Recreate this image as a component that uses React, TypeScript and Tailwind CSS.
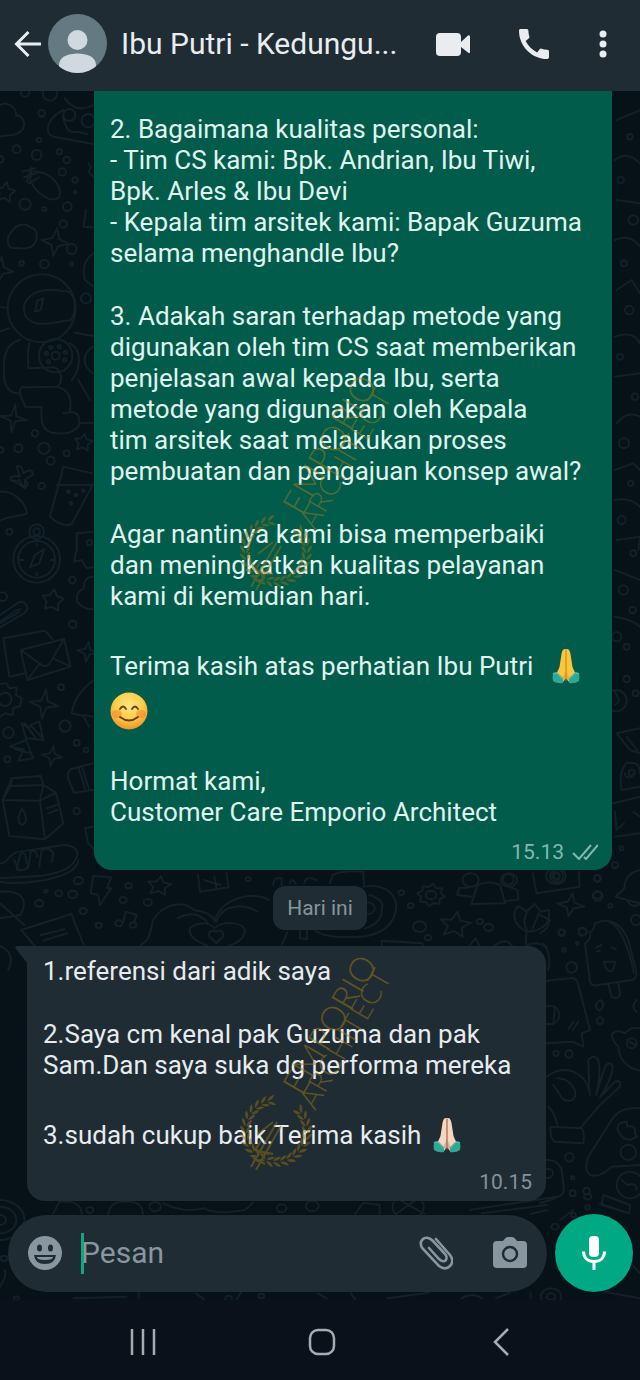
import React from 'react';

type Dot = [number, number, number];

const LEFT_TOP_DOTS: Dot[] = [
  [150, 10, 22], [75, 8, 12], [125, 70, 10], [117, 150, 7], [50, 178, 12], [110, 195, 15], [178, 185, 8],
  [200, 210, 10], [187, 246, 11], [225, 270, 8], [225, 307, 4], [75, 343, 17], [202, 350, 13], [190, 402, 11],
  [133, 357, 6], [65, 520, 7], [133, 522, 13], [215, 477, 15], [214, 522, 5], [258, 625, 15], [0, 208, 10],
  [105, 1030, 10], [55, 1075, 12], [132, 1075, 17], [200, 1090, 9], [152, 1112, 12], [2, 1080, 8],
  [208, 75, 18], [265, 92, 20], [125, 655, 102], [167, 797, 50], [167, 797, 12], [140, 790, 5], [152, 772, 5],
  [178, 770, 5], [196, 787, 5], [194, 810, 5], [145, 815, 5],
];

const LEFT_BOTTOM_DOTS: Dot[] = [
  [125, 18, 10], [28, 155, 9], [217, 300, 10], [218, 433, 11], [8, 350, 13], [15, 658, 20], [195, 738, 17],
  [25, 758, 16], [230, 788, 9], [258, 810, 7], [22, 838, 9], [230, 993, 10], [110, 238, 70], [110, 238, 55],
  [110, 155, 22], [110, 155, 10], [205, 35, 4], [228, 45, 4], [250, 32, 4], [213, 70, 4], [183, 622, 9], [268, 188, 8],
];

const RIGHT_DOTS: Dot[] = [
  [50, 48, 20], [50, 48, 9], [172, 55, 10], [173, 108, 15], [211, 137, 6], [65, 218, 10], [127, 215, 12],
  [72, 270, 5], [112, 250, 4], [95, 322, 16], [180, 482, 10], [48, 580, 8], [87, 582, 11], [88, 892, 13],
  [98, 953, 5], [98, 1000, 9], [140, 993, 10], [143, 1042, 7], [265, 877, 23], [275, 550, 15], [30, 465, 28],
  [288, 180, 15], [25, 940, 14], [270, 975, 40],
];

const MIDDLE_DOTS: Dot[] = [
  [192, 62, 11], [315, 77, 8], [144, 100, 9], [178, 103, 11], [96, 130, 10], [302, 120, 9], [362, 127, 10],
  [204, 153, 9], [242, 196, 8], [608, 58, 6], [983, 98, 7], [1006, 137, 7], [1056, 105, 13], [1028, 200, 16],
  [1049, 233, 8], [1176, 184, 8], [1197, 202, 11], [1464, 106, 10], [1376, 217, 8], [1428, 215, 10],
  [1153, 60, 20], [1247, 60, 20], [1362, 48, 24], [1362, 48, 9], [900, 145, 18], [112, 94, 4],
];

const EDGE_DOTS: Dot[] = [
  [350, 20, 14], [380, 50, 9], [380, 147, 10], [407, 190, 9], [395, 428, 9], [365, 655, 6], [345, 705, 9],
  [292, 745, 10], [165, 740, 14], [25, 748, 16], [348, 212, 32], [398, -60, 10], [370, -120, 14], [400, -230, 9],
  [365, -330, 12], [392, -440, 8], [372, -560, 15], [405, -700, 10], [360, -820, 9], [388, -960, 13],
  [372, -1100, 9], [400, -1230, 14], [362, -1350, 10], [390, -1480, 8],
];

const BOTTOM_DOTS: Dot[] = [
  [0, 90, 60], [0, 90, 40], [0, 90, 15], [380, 50, 14], [765, 48, 16], [1360, 110, 9], [10, 205, 8], [40, 325, 6],
  [1350, 320, 25], [1350, 320, 10], [1405, 75, 6], [1440, 20, 9], [220, 60, 9], [690, 55, 12], [640, 318, 7],
  [1000, 50, 38], [560, 325, 8],
];

function Dots({ items }: { items: Dot[] }) {
  return (
    <>
      {items.map(([cx, cy, r], i) => (
        <circle key={i} cx={cx} cy={cy} r={r} />
      ))}
    </>
  );
}

function starPath(cx: number, cy: number, r: number, points: number, inner: number) {
  const steps = Array.from({ length: points * 2 }, (_, i) => {
    const radius = i % 2 === 0 ? r : r * inner;
    const angle = (Math.PI * i) / points - Math.PI / 2.2;
    return `${(cx + radius * Math.cos(angle)).toFixed(1)} ${(cy + radius * Math.sin(angle)).toFixed(1)}`;
  });
  return `M${steps.join('L')}Z`;
}

// Faint line drawings behind the conversation
function Wallpaper() {
  return (
    <svg
      className="absolute inset-0 h-full w-full [&_*]:[vector-effect:non-scaling-stroke]"
      viewBox="0 91 640 1209"
      preserveAspectRatio="xMidYMin slice"
      fill="none"
      stroke="#132027"
      strokeWidth="2"
      strokeLinejoin="round"
      strokeLinecap="round"
      aria-hidden="true"
    >
      <g transform="translate(0 90) scale(.3333)">
        <Dots items={LEFT_TOP_DOTS} />
        <path d="M0 45C20 35 50 50 48 75C75 80 80 110 60 125C40 145 20 130 0 140" />
        <path d="M280 45C250 62 215 58 195 25M190 60C140 85 130 130 160 140L280 162M188 80C200 112 200 132 232 125L262 132" />
        <path d="M95 245C140 240 190 280 178 322C150 342 110 310 90 272ZM68 245L105 235M72 262L115 248M85 280L118 262M95 232L80 275" />
        <path d={starPath(15, 308, 32, 5, 0.5)} />
        <path d="M40 420C50 400 80 400 90 412C115 415 115 450 100 465C80 485 50 470 42 475C20 475 15 440 40 420Z" />
        <path d={starPath(166, 456, 42, 4, 0.35)} />
        <path d={starPath(0, 540, 40, 4, 0.35)} />
        <path d="M90 620C120 590 180 602 207 605C235 630 225 670 212 690C170 695 120 710 95 695C65 680 65 640 90 620ZM112 632L130 625L122 660L105 665Z" />
        <path d="M60 750C20 760 8 800 12 850C10 890 30 912 60 910M88 760C80 790 85 820 85 835L165 832C188 845 188 880 170 890L65 892C50 910 70 930 75 950L125 952C120 1000 130 1030 170 1030C220 1035 242 1010 238 990C235 962 215 965 190 970M210 965C215 930 210 900 175 892" />
        <path d="M0 725L28 715M225 728L280 738M210 760C250 780 240 840 215 870M235 870L270 930M280 770C245 790 245 830 280 850M238 1000L280 998M0 650L20 655" />
        <path d={starPath(40, 985, 42, 4, 0.25)} />
        <path d={starPath(250, 1058, 28, 5, 0.5)} />
        <path d="M60 1160L50 1130Q65 1120 70 1150Q100 1130 98 1155Q80 1165 75 1170Q95 1190 70 1190L58 1170Q35 1180 30 1165Q40 1155 60 1160M175 1190L190 1130L275 1150M265 220Q280 232 265 245L280 260M258 360L250 410L280 412M280 490Q240 520 255 570L280 590" />
      </g>

      <g transform="translate(0 480) scale(.3333)">
        <Dots items={LEFT_BOTTOM_DOTS} />
        <path d="M0 35C40 30 80 70 80 100C60 110 20 110 0 122M40 0L75 25V0M180 0L150 108C170 132 200 140 215 132L275 20M170 15H280" />
        <path d="M90 262L105 225L132 208L118 250ZM110 190V198M110 278V286M60 240H70M152 240H160" />
        <path d="M280 155L230 160V210L222 245L245 240L260 265L280 262M280 290Q250 290 252 325Q225 335 232 365Q250 390 280 388" />
        <path d={starPath(158, 362, 34, 5, 0.55)} />
        <path d="M0 405L60 365C80 365 88 385 75 398L0 442M0 425L50 390L62 388M0 430L58 396" />
        <path d="M75 580L28 590L10 475L135 452L158 478M62 510L192 477L212 560L82 600ZM62 510L130 558Q145 560 150 548L192 477M82 600L118 552M212 560L160 535" />
        <path d="M0 612L20 610L28 625L50 622L48 645L65 655L60 678L40 685L38 705L15 700L0 710" />
        <path d={starPath(132, 672, 44, 4, 0.3)} />
        <path d={starPath(262, 515, 30, 4, 0.35)} />
        <path d={starPath(156, 828, 30, 4, 0.35)} />
        <path d="M65 730L85 745L92 735L118 725L130 780L78 775ZM75 730L108 775M95 740L125 772M30 800L78 780L100 835L55 842L72 808ZM45 808L92 820" />
        <path d="M280 602Q225 640 215 700L250 708L268 740M252 705L280 710" />
        <path d="M35 895L122 888L130 915L168 938L190 1030L135 1078L28 1068L8 960ZM35 895L32 918L8 960L120 962L135 1078M130 915L120 962L168 938M32 918L128 915M66 985Q45 1025 66 1035Q90 1025 66 985M140 985L170 975M145 1000L172 990" />
        <path d="M280 850L212 868Q195 880 210 910L222 938L280 930M235 862L258 935M245 858L268 932M280 1040L255 1045L265 1090L280 1105" />
        <path d="M0 1150C30 1150 20 1120 60 1115L190 1095C225 1095 240 1115 228 1135C210 1180 130 1190 80 1190L0 1195M50 1170L60 1125Q75 1110 78 1135L80 1150M85 1165L92 1115Q110 1105 112 1130M118 1160L125 1110Q150 1100 160 1120L155 1145" />
      </g>

      <g transform="translate(0 860) scale(.40816 .33333)">
        <Dots items={MIDDLE_DOTS} />
        <path d="M0 65Q40 75 110 60Q190 40 192 0M35 0L45 30Q70 35 70 5M228 48L272 52L262 85H272L245 135L240 105L222 100ZM485 45L490 95L560 82L555 40M500 60L540 75M525 50L530 85" />
        <path d={starPath(390, 78, 30, 5, 0.5)} />
        <path d="M0 95C55 90 70 120 50 165L0 175M0 130L60 195M52 210L175 162L205 255M52 210L85 258M100 225L158 208M105 242L165 220M310 155L335 165L328 190M302 185L308 155M282 190A8 8 0 1 0 300 190A8 8 0 1 0 282 190M318 195A8 8 0 1 0 334 195A8 8 0 1 0 318 195" />
        <path d="M345 255C370 240 370 200 375 180C400 130 450 120 475 150Q525 160 525 185C540 115 620 90 660 120M435 175Q480 145 510 190M530 185C545 130 600 130 630 155M525 205C510 180 460 190 465 215C470 240 495 250 510 258M525 205C545 180 600 185 600 215C595 240 580 250 560 258M530 215Q510 205 512 228L530 250L548 228Q545 205 530 215M690 255L705 215" />
        <path d="M670 75Q668 50 690 55V75M710 70Q715 50 725 72M745 70Q750 45 775 60M808 70L815 45Q840 30 890 35L892 75M890 80C950 70 975 110 970 150C960 220 900 235 850 230C810 235 780 220 770 210M735 210V235L752 238V210M905 105Q945 120 935 150Q935 190 895 205M945 0Q985 30 1025 0" />
        <path d={starPath(1056, 105, 34, 8, 0.72)} />
        <path d={starPath(1115, 195, 40, 5, 0.45)} />
        <path d={starPath(1398, 135, 34, 4, 0.35)} />
        <path d="M1170 75Q1200 60 1225 75L1238 130L1155 132ZM1150 82L1125 85L1120 105L1155 110M1250 82L1268 90L1270 120L1238 122M1305 40L1315 100L1420 80L1418 35" />
        <path d="M1290 215C1250 190 1258 150 1270 138L1290 155L1310 132L1325 155L1345 150Q1350 200 1310 212L1290 215L1288 260M1290 160Q1278 190 1292 212M1320 160L1305 205M1568 30Q1530 40 1530 85L1508 110L1568 130" />
        <path d="M0 258Q40 280 20 330M935 258V242L1035 250V258M1150 258L1165 235L1175 258M1210 258Q1240 230 1255 258M1290 258Q1310 240 1340 262" />
      </g>

      <g transform="translate(540 860) scale(.3333)">
        <Dots items={RIGHT_DOTS} />
        <path d="M260 120Q280 150 300 130" />
        <path d="M165 190Q160 215 150 215Q155 240 135 250L150 365Q155 380 175 375L275 360Q295 355 288 330L265 240Q240 180 190 182ZM205 183Q255 205 282 340M205 372L215 410Q232 420 240 405L235 366M170 275L180 272M215 262L228 268M192 305H225Q222 340 205 332Q195 325 192 305M185 255L170 262" />
        <path d="M20 362L90 355Q110 350 115 375L150 510L125 520L130 560L98 545L20 550M85 508L100 485M98 510L115 485M45 440L40 490M10 250Q35 280 25 330M0 165L30 180L20 205L0 220" />
        <path d="M300 505Q270 500 255 520Q225 505 215 525Q220 545 235 560Q240 620 300 632M268 545L285 555M180 420Q200 430 180 452Q155 440 180 420M290 420Q270 440 290 455" />
        <path d="M20 650Q60 620 100 635Q145 655 150 705L148 690L145 600Q160 580 175 600Q185 640 168 705L195 620Q210 600 218 620Q215 660 180 712L225 665Q245 660 240 680L180 735L120 805M52 655C90 655 110 690 105 710C95 730 70 725 60 705L40 675M25 740Q45 760 52 795M32 800L125 805Q135 815 130 850L45 845Q28 835 32 800" />
        <path d="M300 745Q240 740 215 780L145 890Q130 930 150 945Q180 955 215 920L300 915M240 790L260 785L262 800Q290 795 285 820L292 830L270 840L250 835L235 815Q228 800 240 790" />
        <path d="M0 900Q55 895 65 930L72 990Q70 1010 30 1020L0 1030M245 960L262 975Q290 965 290 990M190 1005L270 1035L268 1060L185 1035ZM60 1080L100 1050" />
      </g>

      <g transform="translate(500 630) scale(.3333)">
        <Dots items={EDGE_DOTS} />
        <path d="M350 310L420 295M350 310L390 360L420 370M380 320L412 362M365 480Q355 430 378 400Q420 390 420 430M365 480L420 470M375 430A12 12 0 1 0 400 430M340 520L420 500M345 545L350 600L372 580M345 620L420 610M400 545L420 560M345 185L358 212L345 225" />
        <path d="M345 -40Q400 -30 420 -10M345 -180L420 -150M350 -270L420 -280L415 -240M345 -390Q390 -400 420 -370M345 -480L400 -500L420 -480M350 -620Q380 -660 420 -640M345 -760L420 -770M345 -880Q400 -900 420 -860M350 -1020L395 -1050L420 -1010M345 -1170Q390 -1190 420 -1150M350 -1290L420 -1280M345 -1410Q380 -1440 420 -1400M350 -1530L420 -1560" />
      </g>

      <g transform="translate(0 1190) scale(.40816 .33333)">
        <Dots items={BOTTOM_DOTS} />
        <path d="M130 72L145 35Q200 30 200 72M265 72Q270 35 300 35Q350 30 350 72M400 40Q450 70 500 55Q530 75 600 60L620 38M870 72L890 38L930 45V72M965 20L1040 72M1030 20L970 72M1150 60L1365 20M1180 70L1340 45M1300 72L1340 60M1470 40L1540 70" />
        <path d="M180 325L310 320M340 305V325M480 310L500 328M590 308L580 328M780 310L800 325M860 310L870 328M950 325L1050 308M1130 325Q1160 305 1180 325M1215 325L1250 308M1300 310V325M1480 305L1568 325M1530 200L1568 250M0 290Q20 250 10 240" />
      </g>
    </svg>
  );
}

// Wreath leaves run clockwise and leave the upper right open
const LEAVES = Array.from({ length: 24 }, (_, i) => -40 + i * 13);

function Watermark({ className }: { className: string }) {
  return (
    <svg
      className={`pointer-events-none absolute left-1/2 h-[250px] w-[220px] -translate-x-1/2 overflow-visible opacity-50 ${className}`}
      viewBox="-15 -5 220 250"
      aria-hidden="true"
    >
      <g fill="#94700f" transform="translate(51 189)">
        {LEAVES.map((angle) => {
          const leftSide = angle > 115;
          return (
            <g key={angle} transform={`rotate(${angle}) translate(31 0) scale(1 ${leftSide ? -1 : 1})`}>
              <path d="M-1 3Q-6 0 -5 -5Q-1 -3 -1 3Z" />
              <path d="M0 3Q5 0 5 -5Q0 -3 0 3Z" />
            </g>
          );
        })}
      </g>
      <g fill="none" stroke="#94700f" strokeWidth="2">
        <path d="M52 180L26 225M56 184L31 228M36 199L30 208L44 212M33 192L48 180M38 210L48 212M28 216L40 222" />
      </g>
      <g fill="#a57c12" fontFamily="Lato, sans-serif" fontWeight="300">
        <text transform="translate(77 155) rotate(-60)" fontSize="34">EMPORIO</text>
        <text transform="translate(90 169) rotate(-60)" fontSize="29">ARCHITECT</text>
      </g>
    </svg>
  );
}

interface HandsProps {
  skin: string;
  shade: string;
}

function FoldedHands({ skin, shade }: HandsProps) {
  return (
    <svg className="mb-1 ml-3 inline-block h-9 w-7 align-middle" viewBox="0 0 28 36" role="img" aria-label="Folded hands">
      <path d="M13 1C11 1 10 3 9.500 6L7.500 19Q6 23 4 26L11 34L14 30L17 34L24 26Q22 23 20.500 19L18.500 6C18 3 17 1 15 1Z" fill={skin} />
      <path d="M14 2V30" stroke={shade} strokeWidth="1.300" fill="none" strokeLinecap="round" />
      <path d="M14 22L10 31L14 33L18 31Z" fill={shade} opacity=".4" />
      <path d="M1 26Q4 24 6 26L11 31V35Q5 36 1 33Q0 29 1 26Z" fill="#2fa893" />
      <path d="M27 26Q24 24 22 26L17 31V35Q23 36 27 33Q28 29 27 26Z" fill="#2fa893" />
      <path d="M1 26Q4 24 6 26L11 31M27 26Q24 24 22 26L17 31" stroke="#4fbfab" strokeWidth="1.500" fill="none" />
    </svg>
  );
}

function SmilingFace() {
  return (
    <svg className="mb-1 inline-block size-[38px] align-middle" viewBox="0 0 38 38" role="img" aria-label="Smiling face">
      <defs>
        <radialGradient id="face" cx=".5" cy=".35" r=".65">
          <stop offset="0" stopColor="#ffe681" />
          <stop offset=".6" stopColor="#fdcb45" />
          <stop offset="1" stopColor="#ee9427" />
        </radialGradient>
      </defs>
      <circle cx="19" cy="19" r="18.500" fill="url(#face)" />
      <ellipse cx="7" cy="22" rx="5" ry="4" fill="#f4792b" opacity=".5" />
      <ellipse cx="31" cy="22" rx="5" ry="4" fill="#f4792b" opacity=".5" />
      <path d="M10 17Q13 12 16 17M22 17Q25 12 28 17M10 25Q19 32 28 25" fill="none" stroke="#5f4017" strokeWidth="1.800" strokeLinecap="round" />
    </svg>
  );
}

function Header() {
  return (
    <header className="flex h-[91px] items-center bg-[#1f2c34] pb-1 text-[#e9edf0]">
      <button className="ml-[14px] flex" aria-label="Back">
        <svg className="h-7 w-[28px]" viewBox="0 0 28 28" fill="none" stroke="currentColor" strokeWidth="3">
          <path d="M27 14H3M14.500 2L2.500 14L14.500 26" />
        </svg>
      </button>
      <svg className="ml-[6px] size-[59px] shrink-0" viewBox="0 0 59 59" role="img" aria-label="Profile picture">
        <defs>
          <clipPath id="avatar">
            <circle cx="29.500" cy="29.500" r="29.500" />
          </clipPath>
        </defs>
        <g clipPath="url(#avatar)">
          <rect width="59" height="59" fill="#657983" />
          <circle cx="29.500" cy="26" r="10" fill="#cfd9df" />
          <path d="M11 59V51C11 43 20 39.500 29.500 39.500S48 43 48 51V59Z" fill="#cfd9df" />
        </g>
      </svg>
      <h1 className="ml-[14px] min-w-0 flex-1 truncate text-[30px] leading-9">Ibu Putri - Kedungu...</h1>
      <div className="mr-[33px] flex items-center">
        <button className="flex" aria-label="Video call">
          <svg className="h-6 w-[34px]" viewBox="0 0 34 24" fill="currentColor">
            <rect y="1" width="25" height="23" rx="4" />
            <path d="M25 10L32 3.500Q34 2.500 34 5V20Q34 22 32 20.500L25 15Z" />
          </svg>
        </button>
        <button className="ml-[49px] flex" aria-label="Voice call">
          <svg className="size-[30px]" viewBox="3 3 18 18" fill="currentColor">
            <path d="M20.010 15.380c-1.230 0-2.420-.200-3.530-.560-.350-.120-.740-.030-1.010.240l-1.570 1.970c-2.830-1.350-5.480-3.900-6.890-6.830l1.950-1.660c.270-.280.350-.670.240-1.020-.370-1.110-.560-2.300-.560-3.530 0-.540-.450-.990-.990-.990H4.190C3.650 3 3 3.240 3 3.990 3 13.280 10.730 21 20.010 21c.710 0 .990-.630.990-1.180v-3.450c0-.540-.450-.990-.990-.990z" />
          </svg>
        </button>
        <button className="ml-[50px] flex" aria-label="More options">
          <svg className="h-7 w-2" viewBox="0 0 8 28" fill="currentColor">
            <circle cx="4" cy="4" r="3.500" />
            <circle cx="4" cy="14" r="3.500" />
            <circle cx="4" cy="24" r="3.500" />
          </svg>
        </button>
      </div>
    </header>
  );
}

function SentMessage() {
  return (
    <div className="relative flex justify-end pr-7">
      <div className="flex w-[518px] flex-col gap-8 rounded-b-[18px] bg-[#015c4b] pt-[23px] pr-[14px] pb-[6px] pl-4 text-[26px] leading-[31px] text-[#e0f3ef]">
        <p>
          2. Bagaimana kualitas personal:
          <br />- Tim CS kami: Bpk. Andrian, Ibu Tiwi,
          <br />Bpk. Arles &amp; Ibu Devi
          <br />- Kepala tim arsitek kami: Bapak Guzuma
          <br />selama menghandle Ibu?
        </p>
        <p className="whitespace-nowrap">
          3. Adakah saran terhadap metode yang
          <br />digunakan oleh tim CS saat memberikan
          <br />penjelasan awal kepada Ibu, serta
          <br />metode yang digunakan oleh Kepala
          <br />tim arsitek saat melakukan proses
          <br />pembuatan dan pengajuan konsep awal?
        </p>
        <p>
          Agar nantinya kami bisa memperbaiki
          <br />dan meningkatkan kualitas pelayanan
          <br />kami di kemudian hari.
        </p>
        <p className="leading-[45px]">
          Terima kasih atas perhatian Ibu Putri <FoldedHands skin="#fbc53c" shade="#e08a1e" />
          <br />
          <SmilingFace />
        </p>
        <div>
          <p>
            Hormat kami,
            <br />Customer Care Emporio Architect
          </p>
          <div className="mt-3 flex items-center justify-end gap-2 text-[21px] leading-6 text-[#86b6ac]">
            <time>15.13</time>
            <svg className="h-4 w-[26px]" viewBox="0 0 26 16" fill="none" stroke="currentColor" strokeWidth="2" role="img" aria-label="Delivered">
              <path d="M1 9L7 15L19 1M12 13L14 15L26 1" />
            </svg>
          </div>
        </div>
      </div>
      <Watermark className="top-[266px]" />
    </div>
  );
}

function ReceivedMessage() {
  return (
    <div className="relative flex pl-[27px]">
      <svg className="absolute top-0 left-[15px] h-[18px] w-[13px]" viewBox="0 0 13 18" fill="#1f2c34" aria-hidden="true">
        <path d="M13 0H2Q-1 1 1 3L13 18Z" />
      </svg>
      <div className="flex w-[519px] flex-col gap-8 rounded-[18px] rounded-tl-none bg-[#1f2c34] pt-[10px] pr-[14px] pb-[7px] pl-4 text-[26px] leading-[31px] text-[#e6ebee]">
        <p>1.referensi dari adik saya</p>
        <p className="whitespace-nowrap">
          2.Saya cm kenal pak Guzuma dan pak
          <br />Sam.Dan saya suka dg performa mereka
        </p>
        <div>
          <p className="leading-[45px]">
            3.sudah cukup baik.Terima kasih
            <FoldedHands skin="#f8d5bf" shade="#a8705c" />
          </p>
          <time className="mt-3 block text-right text-[21px] leading-6 text-[#84929a]">10.15</time>
        </div>
      </div>
      <Watermark className="-top-[9px]" />
    </div>
  );
}

function Composer() {
  return (
    <form className="relative mt-[13px] flex items-center gap-2 pr-[7px] pl-2">
      <div className="flex h-[77px] min-w-0 flex-1 items-center rounded-full bg-[#1f2c34] px-5 text-[#87969f]">
        <button type="button" className="flex" aria-label="Emoji">
          <svg className="size-[34px]" viewBox="0 0 34 34">
            <circle cx="17" cy="17" r="17" fill="currentColor" />
            <g fill="#1f2c34">
              <ellipse cx="11.500" cy="12" rx="2.500" ry="3.500" />
              <ellipse cx="22.500" cy="12" rx="2.500" ry="3.500" />
              <path d="M6 19H28Q27 28 17 28T6 19Z" />
            </g>
            <path d="M9 21H25Q25 24 17 24T9 21Z" fill="currentColor" />
          </svg>
        </button>
        <div className="relative ml-[19px] flex min-w-0 flex-1">
          <input
            type="text"
            aria-label="Pesan"
            placeholder="Pesan"
            className="w-full bg-transparent text-[30px] leading-10 outline-none placeholder:text-[#87969f]"
          />
          <span className="absolute top-0 left-0 h-[41px] w-[3px] bg-[#0fa883]" />
        </div>
        <button type="button" className="flex" aria-label="Attach">
          <svg className="size-[34px]" viewBox="0 0 34 34" fill="none" stroke="currentColor" strokeWidth="2.600" strokeLinecap="round">
            <path d="M17 3L31 19C34 23 34 27 31 30S24 33 20 30L4 13C1 9 1 6 3.500 3.500S10 1 14 5L26 18C28 20 28 23 26.500 24.500S22 25 20 23L10 12" />
          </svg>
        </button>
        <button type="button" className="ml-10 flex" aria-label="Camera">
          <svg className="h-8 w-[34px]" viewBox="0 0 34 32">
            <path d="M10 4L12 1.500Q13 0 15 0H19Q21 0 22 1.500L24 4H30Q34 4 34 8V27Q34 31 30 31H4Q0 31 0 27V8Q0 4 4 4Z" fill="currentColor" />
            <circle cx="17" cy="17" r="7" fill="none" stroke="#1f2c34" strokeWidth="2.500" />
          </svg>
        </button>
      </div>
      <button type="button" className="flex size-[78px] shrink-0 items-center justify-center rounded-full bg-[#00a884] text-white" aria-label="Record voice message">
        <svg className="h-[34px] w-6" viewBox="0 0 24 34" fill="none" stroke="currentColor" strokeWidth="3">
          <rect x="7" y="0" width="10" height="21" rx="4" fill="currentColor" stroke="none" />
          <path d="M1.500 15.500C1.500 22 6 25.500 12 25.500S22.500 22 22.500 15.500M12 25V34" />
        </svg>
      </button>
    </form>
  );
}

function NavigationBar() {
  return (
    <nav className="grid h-20 grid-cols-3 items-center justify-items-center bg-[#09111a] pt-1 pr-[50px] pl-[54px] text-[#a6acb1]">
      <button className="flex" aria-label="Recent apps">
        <svg className="h-7 w-[26px]" viewBox="0 0 26 28" stroke="currentColor" strokeWidth="2.500">
          <path d="M2 1V27M13 1V27M24 1V27" />
        </svg>
      </button>
      <button className="flex" aria-label="Home">
        <svg className="h-7 w-[28px]" viewBox="0 0 28 28" fill="none" stroke="currentColor" strokeWidth="2.500">
          <rect x="2" y="2" width="24" height="24" rx="8" />
        </svg>
      </button>
      <button className="flex" aria-label="Back">
        <svg className="h-7 w-4" viewBox="0 0 16 28" fill="none" stroke="currentColor" strokeWidth="2.500">
          <path d="M15 1L2 14L15 27" />
        </svg>
      </button>
    </nav>
  );
}

export default function App() {
  return (
    <div className="flex min-h-screen flex-col bg-[#061118] font-['Roboto',sans-serif]">
      <Header />
      <main className="relative flex-1 overflow-hidden pb-[7px]">
        <Wallpaper />
        <SentMessage />
        <div className="relative my-4 flex justify-center">
          <span className="rounded-xl bg-[#1f2c34] px-[14px] py-2 text-[21px] leading-7 text-[#87959d]">Hari ini</span>
        </div>
        <ReceivedMessage />
        <Composer />
      </main>
      <NavigationBar />
    </div>
  );
}
